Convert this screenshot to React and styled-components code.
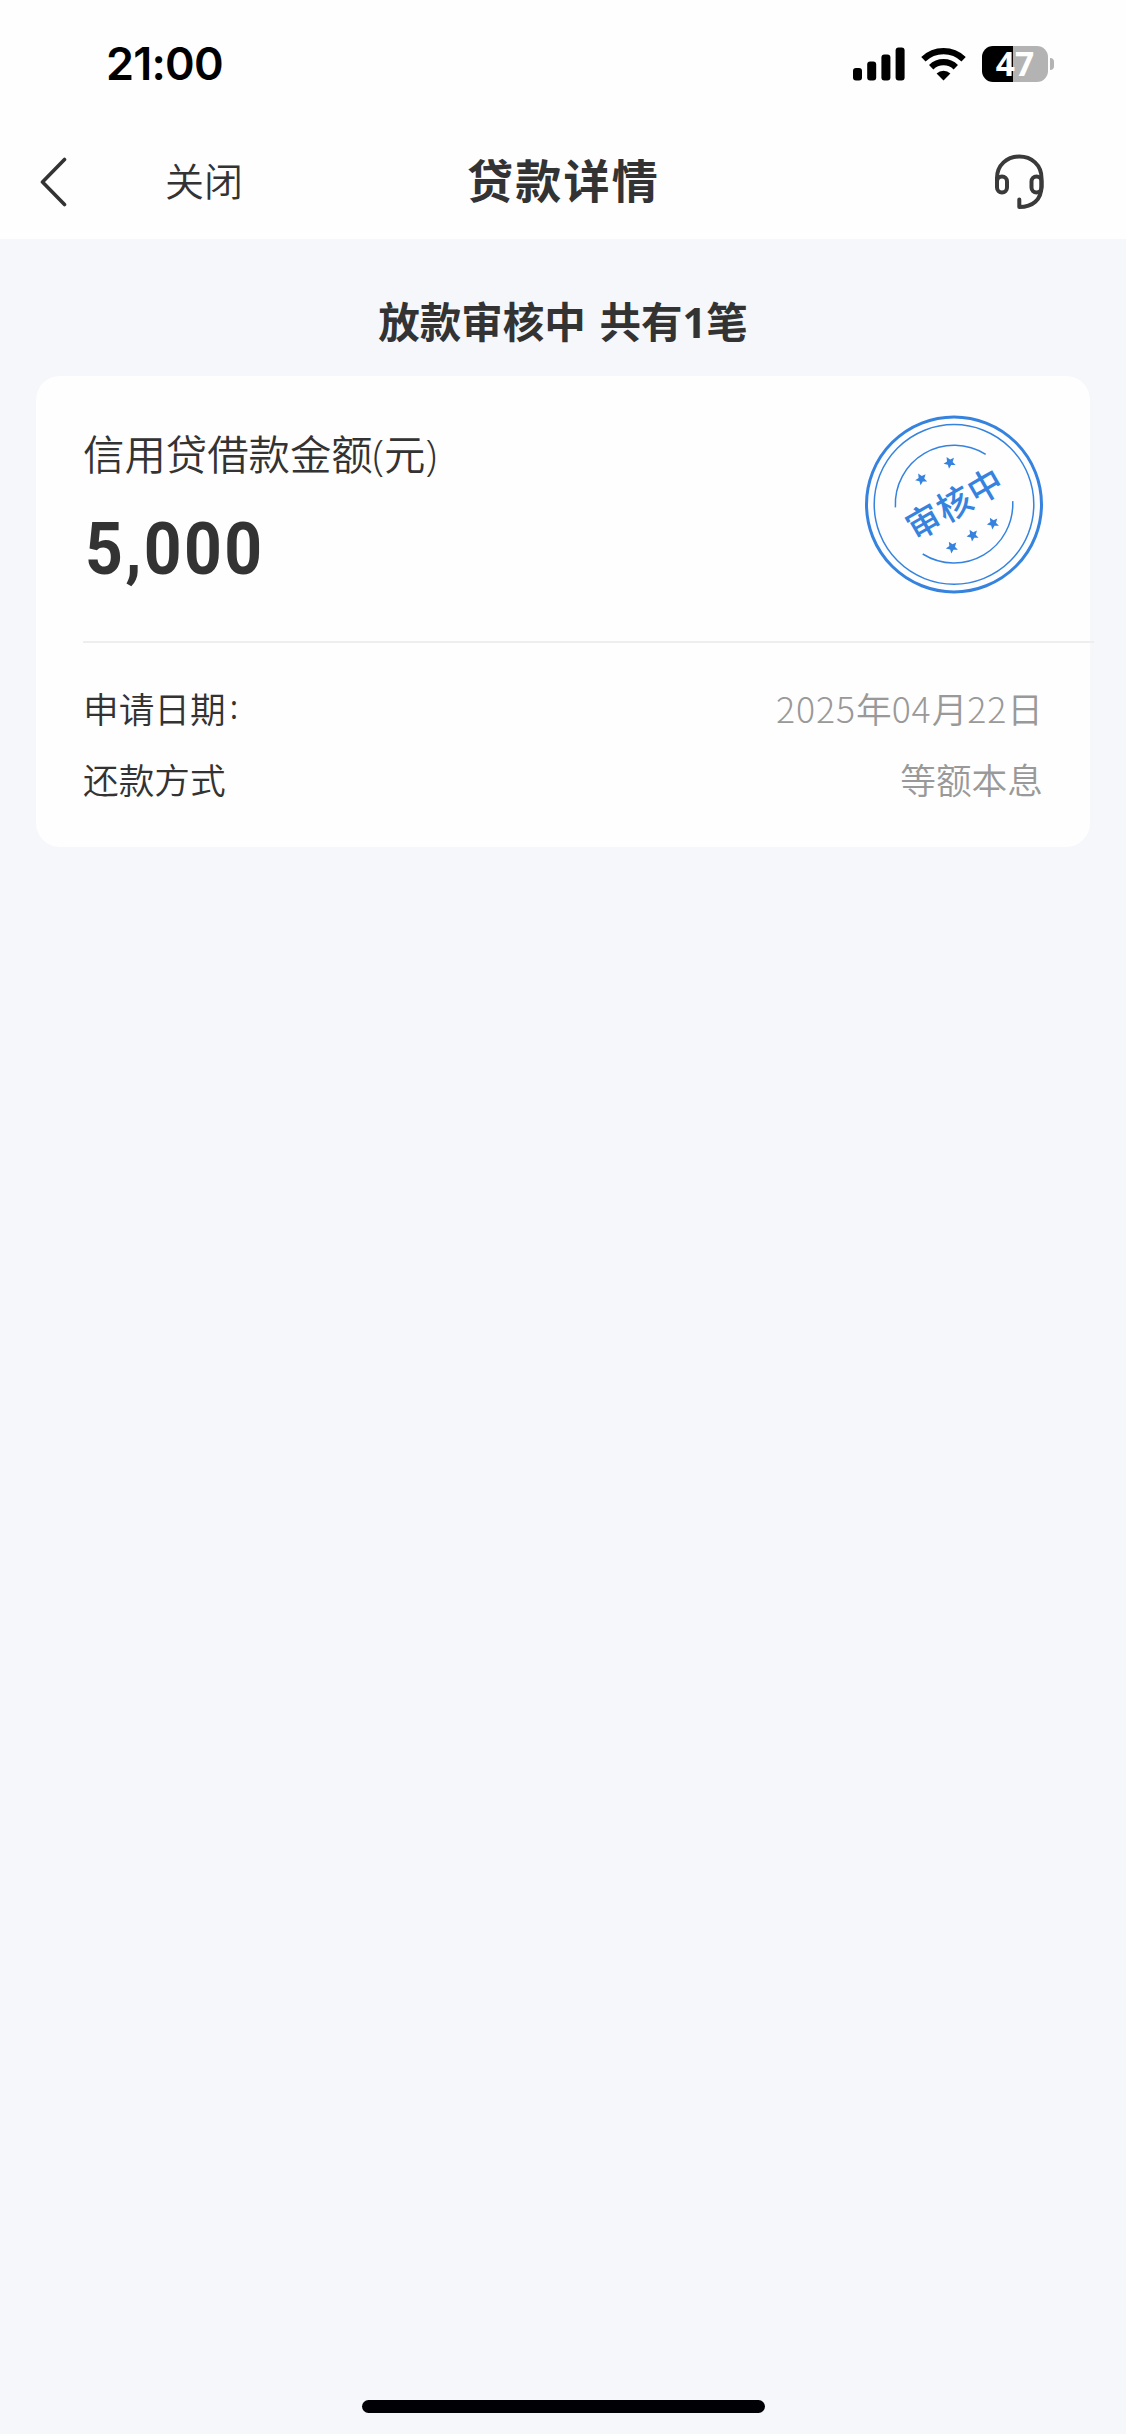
import React from 'react';
import styled, { createGlobalStyle } from 'styled-components';

const GlobalStyle = createGlobalStyle`
  * {
    box-sizing: border-box;
  }
  body {
    margin: 0;
    background: #f5f7fb;
    font-family: 'Open Sans', 'Noto Sans CJK SC', sans-serif;
    color: #333333;
  }
`;

const Page = styled.div`
  display: flex;
  flex-direction: column;
  width: 1126px;
  height: 2434px;
  overflow: hidden;
`;

const StatusBar = styled.div`
  display: flex;
  align-items: center;
  height: 128px;
  padding: 0 72px 0 106px;
  background: #fefefe;
`;

const Time = styled.div`
  flex: 1;
  font-family: 'Inter', sans-serif;
  font-size: 45px;
  font-weight: 600;
  line-height: 54px;
  letter-spacing: -0.8px;
  color: #000000;
`;

const Signal = styled.svg`
  margin-right: 16px;
`;

const Wifi = styled.svg`
  margin-right: 16px;
`;

const Battery = styled.div`
  display: flex;
  align-items: center;
  justify-content: center;
  width: 66px;
  height: 36px;
  padding-bottom: 2px;
  border-radius: 11px;
  background: linear-gradient(to right, #000000 31px, #b3b3b3 31px);
  font-family: 'Open Sans', sans-serif;
  font-size: 33.5px;
  font-weight: 700;
  line-height: 36px;
  color: #ffffff;
`;

const BatteryTip = styled.div`
  width: 4px;
  height: 12px;
  margin-left: 2px;
  border-radius: 0 4px 4px 0;
  background: #b3b3b3;
`;

const NavBar = styled.div`
  display: grid;
  grid-template-columns: 1fr auto 1fr;
  align-items: center;
  height: 111px;
  padding: 0 80px 4px 39px;
  background: #fefefe;
`;

const NavLeft = styled.div`
  display: flex;
  align-items: center;
`;

const Close = styled.div`
  margin-left: 98px;
  padding-bottom: 6px;
  font-family: 'Noto Sans CJK SC', sans-serif;
  font-size: 39px;
  font-weight: 350;
  line-height: 56px;
`;

const Title = styled.div`
  margin-left: 42px;
  padding-bottom: 8px;
  font-family: 'Noto Sans CJK SC', sans-serif;
  font-size: 46px;
  font-weight: 700;
  line-height: 60px;
  letter-spacing: 2.2px;
`;

const Headset = styled.svg`
  justify-self: end;
`;

const Summary = styled.div`
  padding-top: 53px;
  height: 137px;
  text-align: center;
  font-size: 41.5px;
  font-weight: 700;
  line-height: 60px;
  word-spacing: 3px;
`;

const Card = styled.div`
  width: 1054px;
  height: 471px;
  margin: 0 36px;
  padding-left: 47px;
  border-radius: 24px;
  background: #fefefe;
`;

const CardTop = styled.div`
  display: flex;
  justify-content: space-between;
  height: 265px;
  padding: 38px 46px 0 0;
`;

const Label = styled.div`
  margin-top: 10px;
  font-size: 41.4px;
  font-weight: 350;
  line-height: 60px;
`;

const Amount = styled.div`
  margin-top: 24px;
  margin-left: 2px;
  font-family: 'Roboto', sans-serif;
  font-size: 72.5px;
  font-weight: 700;
  line-height: 84px;
  letter-spacing: 2.6px;
  transform: scaleX(0.91);
  transform-origin: left;
`;

// the line runs slightly past the right edge of the card
const Divider = styled.div`
  width: 1011px;
  height: 2px;
  background: #eeeeef;
`;

const Rows = styled.div`
  padding: 31px 47px 0 0;
`;

const Row = styled.div`
  display: flex;
  justify-content: space-between;
  height: 71px;
  font-size: 35.7px;
  font-weight: 350;
  line-height: 71px;
`;

const Colon = styled.span`
  margin-left: 4px;
  font-size: 32px;
  font-weight: 500;
  line-height: 1;
  vertical-align: 4px;
`;

const Value = styled.div`
  color: #999999;
`;

const Num = styled.span`
  font-family: 'Noto Sans CJK SC', sans-serif;
  font-weight: 300;
  line-height: 1;
  letter-spacing: 0.9px;
`;

const HomeIndicator = styled.div`
  width: 403px;
  height: 13px;
  margin: auto auto 21px 362px;
  border-radius: 7px;
  background: #000005;
`;

const StampText = styled.text`
  font-family: 'Noto Sans CJK SC', sans-serif;
  font-size: 34.5px;
  font-weight: 500;
  letter-spacing: 1px;
`;

const stars = [
  [-4.3, -42],
  [-32.7, -25.5],
  [39, 18.7],
  [18.7, 30.7],
  [-2, 42.7]
];

function Stamp() {
  return (
    <svg width="180" height="180" viewBox="-90 -90.4 180 180">
      <g fill="none" stroke="#3583de">
        <circle r="87.5" strokeWidth="3" />
        <circle r="79.8" strokeWidth="1.5" />
        <path d="M-58.6 3A58.9 58.9 0 0 1 31.7 -50" strokeWidth="1.5" />
        <path d="M58.7 -3.3A58.9 58.9 0 0 1 -31.3 49.6" strokeWidth="1.5" />
      </g>
      <g fill="#3583de">
        {stars.map(([x, y]) => (
          <path
            key={x}
            transform={`translate(${x} ${y}) rotate(-30)`}
            d="M0 -6.3L1.8 -2.2L6 -1.9L2.8 1.1L3.8 5.2L0 3L-3.8 5.2L-2.8 1.1L-6 -1.9L-1.8 -2.2Z"
          />
        ))}
        <StampText transform="rotate(-30)" x="1" y="12.5" textAnchor="middle">
          审核中
        </StampText>
      </g>
    </svg>
  );
}

function App() {
  return (
    <Page>
      <GlobalStyle />
      <StatusBar>
        <Time>21:00</Time>
        <Signal width="52" height="34" viewBox="0 0 52 34">
          <rect x="0" y="21" width="9" height="12.5" rx="3" />
          <rect x="14.2" y="14.5" width="9" height="19" rx="3" />
          <rect x="28.4" y="7.5" width="9" height="26" rx="3" />
          <rect x="42.6" y="0.5" width="9" height="33" rx="3" />
        </Signal>
        <Wifi width="45" height="34" viewBox="0 0 45 34">
          <g fill="none" stroke="#000000" strokeWidth="6.2">
            <path d="M2.4 12.2A29 29 0 0 1 42.6 12.2" />
            <path d="M10.2 20.2A17.6 17.6 0 0 1 34.8 20.2" />
          </g>
          <path d="M22.5 33.5L15.6 26.6A10 10 0 0 1 29.4 26.6Z" />
        </Wifi>
        <Battery>47</Battery>
        <BatteryTip />
      </StatusBar>
      <NavBar>
        <NavLeft>
          <svg width="28" height="52" viewBox="0 0 28 52">
            <path
              d="M25.5 3.5L3.5 26L25.5 48.5"
              fill="none"
              stroke="#333333"
              strokeWidth="3.6"
              strokeLinecap="round"
              strokeLinejoin="round"
            />
          </svg>
          <Close>关闭</Close>
        </NavLeft>
        <Title>贷款详情</Title>
        <Headset width="52" height="56" viewBox="0 0 52 56">
          <g
            fill="none"
            stroke="#3a3a3a"
            strokeWidth="4"
            strokeLinecap="round"
            strokeLinejoin="round"
          >
            <path d="M3 31V24C3 11 13 2.5 25.3 2.5S47.5 11 47.5 24V32C47.5 46 38.5 53 25.3 53V45.5" />
            <rect x="3" y="22.5" width="10" height="16" rx="5" />
            <rect x="37.5" y="22.5" width="10" height="16" rx="5" />
          </g>
        </Headset>
      </NavBar>
      <Summary>放款审核中 共有1笔</Summary>
      <Card>
        <CardTop>
          <div>
            <Label>信用贷借款金额(元)</Label>
            <Amount>5,000</Amount>
          </div>
          <Stamp />
        </CardTop>
        <Divider />
        <Rows>
          <Row>
            <div>
              申请日期<Colon>:</Colon>
            </div>
            <Value>
              <Num>2025</Num>年<Num>04</Num>月<Num>22</Num>日
            </Value>
          </Row>
          <Row>
            <div>还款方式</div>
            <Value>等额本息</Value>
          </Row>
        </Rows>
      </Card>
      <HomeIndicator />
    </Page>
  );
}

export default App;
